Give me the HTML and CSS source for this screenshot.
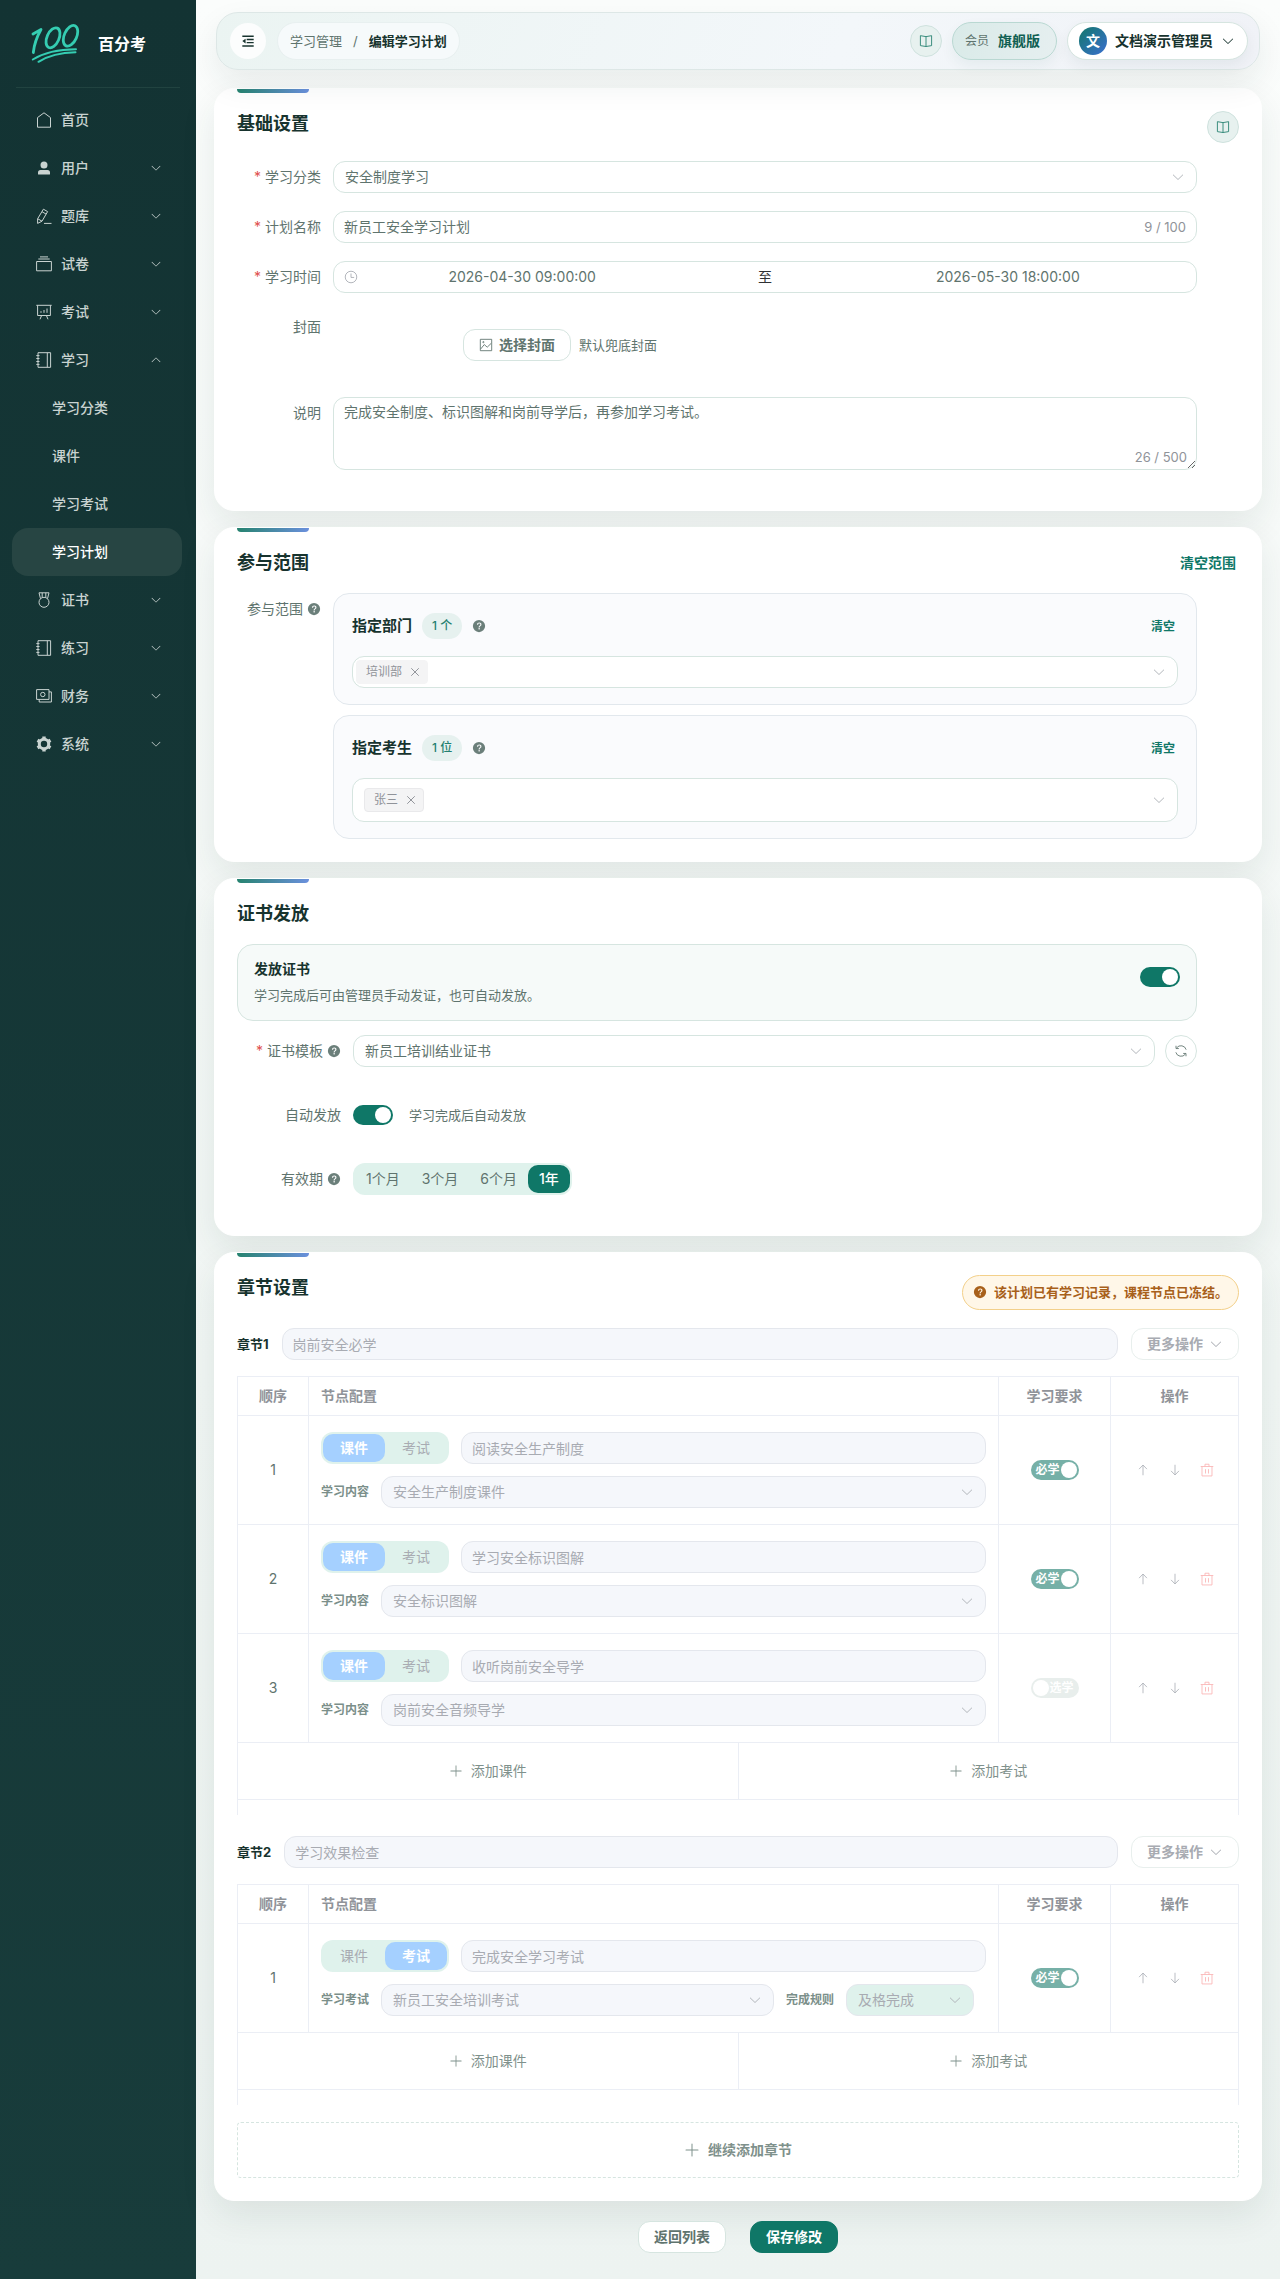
FILE: index.html
```html
<!DOCTYPE html>
<html lang="zh-CN">
<head>
	<meta charset="utf-8">
	<meta name="viewport" content="width=device-width, initial-scale=1">
	<title>编辑学习计划</title>
	<link rel="stylesheet" href="styles.css">
</head>
<body>
	<!-- icon sprite -->
	<svg class="sprite" aria-hidden="true">
		<symbol id="i-home" viewBox="0 0 16 16"><path d="M1.5 5.6 8 .8l6.500 4.800v9.600h-13z"/></symbol>
		<symbol id="i-user" viewBox="0 0 1024 1024"><path class="fill" d="M288 320a224 224 0 1 0 448 0 224 224 0 1 0-448 0zm544 608H160a32 32 0 0 1-32-32v-96a160 160 0 0 1 160-160h448a160 160 0 0 1 160 160v96a32 32 0 0 1-32 32z"/></symbol>
		<symbol id="i-edit" viewBox="0 0 16 16"><path d="M7.400 1.200 11.600 3.600 6 13.200l-4.400 2.200V10.800zM6 3.700l4.100 2.400M1.800 10.800 6 13.200M8 15.400h7.500"/></symbol>
		<symbol id="i-files" viewBox="0 0 16 16"><path d="M.6 5.500h14.800v9.300H.6zM2.300 3h11.400M4 .9h8"/></symbol>
		<symbol id="i-board" viewBox="0 0 16 16"><path d="M.3 1.300h15.400M1.600 1.300v10.200h12.800V1.300M5.600 11.500 4 15.300M10.400 11.500l1.600 3.800M5 7.200v1.600M8 6v2.800M11 4.500v4.300"/></symbol>
		<symbol id="i-notebook" viewBox="0 0 16 16"><path d="M2 .7h12.600v14.600H2zM11.300.7v14.600M.3 3.600h3.200M.3 6.500h3.200M.3 9.500h3.200M.3 12.400h3.200"/></symbol>
		<symbol id="i-medal" viewBox="0 0 16 16"><circle cx="8" cy="10.300" r="5"/><path d="M4.500 6.700 3 .8h10l-1.500 5.900M6.200.8v4.600M9.800.8v4.600"/></symbol>
		<symbol id="i-money" viewBox="0 0 16 16"><path d="M.6 1.600h12.400v9.800H.6zM13 3.900h2.400v10.100H3.200v-2.600"/><circle cx="6.800" cy="6.500" r="2.200"/></symbol>
		<symbol id="i-gear" viewBox="0 0 16 16"><circle cx="8" cy="8" r="4.700" stroke-width="3"/><path stroke-width="3.400" d="M8 3.500v-3M8 12.500v3M4.100 5.750 1.500 4.250M11.900 5.750l2.600-1.500M4.100 10.250l-2.600 1.500M11.900 10.250l2.600 1.500"/></symbol>
		<symbol id="i-down" viewBox="0 0 1024 1024"><path class="fill" d="M831.872 340.864 512 652.672 192.128 340.864a30.592 30.592 0 0 0-42.752 0 29.12 29.12 0 0 0 0 41.600L489.664 714.240a32 32 0 0 0 44.672 0l340.288-331.712a29.12 29.12 0 0 0 0-41.728 30.592 30.592 0 0 0-42.752 0z"/></symbol>
		<symbol id="i-up" viewBox="0 0 1024 1024"><path class="fill" transform="rotate(180 512 512)" d="M831.872 340.864 512 652.672 192.128 340.864a30.592 30.592 0 0 0-42.752 0 29.12 29.12 0 0 0 0 41.600L489.664 714.240a32 32 0 0 0 44.672 0l340.288-331.712a29.12 29.12 0 0 0 0-41.728 30.592 30.592 0 0 0-42.752 0z"/></symbol>
		<symbol id="i-plus" viewBox="0 0 1024 1024"><path class="fill" d="M480 480V128a32 32 0 0 1 64 0v352h352a32 32 0 1 1 0 64H544v352a32 32 0 1 1-64 0V544H128a32 32 0 0 1 0-64h352z"/></symbol>
		<symbol id="i-close" viewBox="0 0 16 16"><path stroke-width="1.300" d="m3 3 10 10M13 3 3 13"/></symbol>
		<symbol id="i-help" viewBox="0 0 1024 1024"><path class="fill" d="M512 64a448 448 0 1 1 0 896 448 448 0 0 1 0-896zm23.744 191.488c-52.096 0-92.928 14.784-123.200 44.352-30.976 29.568-45.760 70.400-45.760 122.496h80.256c0-29.568 5.632-52.800 17.600-68.992 13.376-19.712 35.200-28.864 66.176-28.864 23.936 0 42.944 6.336 56.320 19.712 12.672 13.376 19.712 31.680 19.712 54.912 0 17.600-6.336 34.496-19.008 49.984l-8.448 9.856c-45.760 40.832-73.216 70.400-82.368 89.408-9.856 19.008-14.080 42.240-14.080 68.992v9.856h80.960v-9.856c0-16.896 3.520-31.680 10.560-45.760 6.336-12.672 15.488-24.640 28.160-35.200 33.792-29.568 54.208-48.576 60.544-55.616 16.896-22.528 26.048-51.392 26.048-86.592 0-42.944-14.080-76.736-42.240-101.376-28.160-25.344-65.472-37.312-111.232-37.312zm-12.672 406.208a54.272 54.272 0 0 0-38.720 14.784 49.408 49.408 0 0 0-15.488 38.016c0 15.488 4.928 28.160 15.488 38.016A54.848 54.848 0 0 0 523.072 768c15.488 0 28.160-4.928 38.720-14.784a51.520 51.520 0 0 0 16.192-38.720 51.968 51.968 0 0 0-15.488-38.016 55.936 55.936 0 0 0-39.424-14.784z"/></symbol>
		<symbol id="i-fold" viewBox="0 0 16 16"><path stroke-width="1.600" d="M1.500 2.500h13M6.500 6.300h8M6.500 9.900h8M1.500 13.700h13"/><path class="fill" d="M5.200 5.300v5.500L1.500 8z"/></symbol>
		<symbol id="i-book" viewBox="0 0 16 16"><path d="M8 3 1.600 1.900v11.400L8 14.300l6.400-1V1.900zM8 3v11.300"/></symbol>
		<symbol id="i-clock" viewBox="0 0 16 16"><circle cx="8" cy="8" r="6.600"/><path d="M8 4v4.500h3.600"/></symbol>
		<symbol id="i-picture" viewBox="0 0 16 16"><path d="M1.500 1.500h13v13h-13zM2 12.500l4-5 3.400 3 4.600-4.500"/><circle cx="5" cy="4.700" r=".7"/></symbol>
		<symbol id="i-refresh" viewBox="0 0 16 16"><path d="M13.900 6.500A6.200 6.200 0 0 0 3 4.400M2.100 9.500A6.200 6.200 0 0 0 13 11.600M2.300 2v3.200h3.200M13.700 14v-3.200h-3.200"/></symbol>
		<symbol id="i-top" viewBox="0 0 16 16"><path d="M8 14V2.300M3.500 7 8 2.300 12.500 7"/></symbol>
		<symbol id="i-bottom" viewBox="0 0 16 16"><path d="M8 2v11.700M3.500 9 8 13.700 12.500 9"/></symbol>
		<symbol id="i-delete" viewBox="0 0 16 16"><path d="M.8 4h14.400M5.700 4V1.400h4.600V4M2.300 4v10.800h11.400V4M6.300 7v5M9.700 7v5"/></symbol>
	</svg>

	<div class="layout">
		<aside class="sidebar">
			<div class="brand">
				<svg class="brand-logo" viewBox="0 0 50 40" aria-hidden="true">
					<g fill="none" stroke="#35cdb2" stroke-width="2.800" stroke-linecap="round" stroke-linejoin="round">
						<path d="M2 10 10 5.500Q3.500 17 2.300 28.500"/>
						<ellipse cx="22" cy="13.800" rx="6" ry="10.600" transform="rotate(24 22 13.800)"/>
						<ellipse cx="39.500" cy="11.800" rx="6.200" ry="11" transform="rotate(24 39.500 11.800)"/>
						<path d="M1.800 35.500Q18 25.500 45 25.300" stroke-width="2"/>
						<path d="M7.500 37.800Q22 28.800 44.500 28.300" stroke-width="2"/>
					</g>
				</svg>
				<span class="brand-name">百分考</span>
			</div>
			<nav class="menu">
				<a class="menu-item" href="#"><svg class="icon"><use href="#i-home"/></svg>首页</a>
				<a class="menu-item" href="#"><svg class="icon"><use href="#i-user"/></svg>用户<svg class="arrow"><use href="#i-down"/></svg></a>
				<a class="menu-item" href="#"><svg class="icon"><use href="#i-edit"/></svg>题库<svg class="arrow"><use href="#i-down"/></svg></a>
				<a class="menu-item" href="#"><svg class="icon"><use href="#i-files"/></svg>试卷<svg class="arrow"><use href="#i-down"/></svg></a>
				<a class="menu-item" href="#"><svg class="icon"><use href="#i-board"/></svg>考试<svg class="arrow"><use href="#i-down"/></svg></a>
				<a class="menu-item" href="#"><svg class="icon"><use href="#i-notebook"/></svg>学习<svg class="arrow"><use href="#i-up"/></svg></a>
				<a class="menu-item sub" href="#">学习分类</a>
				<a class="menu-item sub" href="#">课件</a>
				<a class="menu-item sub" href="#">学习考试</a>
				<a class="menu-item sub active" href="#">学习计划</a>
				<a class="menu-item" href="#"><svg class="icon"><use href="#i-medal"/></svg>证书<svg class="arrow"><use href="#i-down"/></svg></a>
				<a class="menu-item" href="#"><svg class="icon"><use href="#i-notebook"/></svg>练习<svg class="arrow"><use href="#i-down"/></svg></a>
				<a class="menu-item" href="#"><svg class="icon"><use href="#i-money"/></svg>财务<svg class="arrow"><use href="#i-down"/></svg></a>
				<a class="menu-item" href="#"><svg class="icon"><use href="#i-gear"/></svg>系统<svg class="arrow"><use href="#i-down"/></svg></a>
			</nav>
		</aside>

		<div class="main">
			<header class="topbar">
				<button class="fold" type="button" aria-label="折叠菜单"><svg class="icon"><use href="#i-fold"/></svg></button>
				<nav class="crumbs">
					<a href="#">学习管理</a>
					<span class="slash">/</span>
					<strong>编辑学习计划</strong>
				</nav>
				<div class="topbar-right">
					<button class="round help-doc" type="button" aria-label="帮助文档"><svg class="icon"><use href="#i-book"/></svg></button>
					<a class="member" href="#"><span>会员</span><strong>旗舰版</strong></a>
					<button class="account" type="button">
						<span class="avatar">文</span>
						文档演示管理员
						<svg class="icon"><use href="#i-down"/></svg>
					</button>
				</div>
			</header>

			<section class="card">
				<div class="card-head">
					<h2>基础设置</h2>
					<button class="round help-doc" type="button" aria-label="帮助文档"><svg class="icon"><use href="#i-book"/></svg></button>
				</div>
				<div class="form">
					<div class="form-item">
						<label class="label required" for="category">学习分类</label>
						<select class="field" id="category"><option>安全制度学习</option></select>
					</div>
					<div class="form-item">
						<label class="label required" for="plan-name">计划名称</label>
						<div class="field count-field">
							<input id="plan-name" type="text" value="新员工安全学习计划">
							<span class="count">9 / 100</span>
						</div>
					</div>
					<div class="form-item">
						<label class="label required" for="start">学习时间</label>
						<div class="field range">
							<svg class="icon"><use href="#i-clock"/></svg>
							<input id="start" type="text" value="2026-04-30 09:00:00">
							<span class="to">至</span>
							<input type="text" aria-label="结束时间" value="2026-05-30 18:00:00">
						</div>
					</div>
					<div class="form-item">
						<span class="label">封面</span>
						<div class="cover">
							<button class="btn" type="button"><svg class="icon"><use href="#i-picture"/></svg>选择封面</button>
							<span class="hint">默认兜底封面</span>
						</div>
					</div>
					<div class="form-item">
						<label class="label" for="remark">说明</label>
						<div class="area">
							<textarea class="field" id="remark">完成安全制度、标识图解和岗前导学后，再参加学习考试。</textarea>
							<span class="count">26 / 500</span>
						</div>
					</div>
				</div>
			</section>

			<section class="card">
				<div class="card-head">
					<h2>参与范围</h2>
					<button class="link" type="button">清空范围</button>
				</div>
				<div class="form">
					<div class="form-item">
						<span class="label">参与范围<svg class="help"><use href="#i-help"/></svg></span>
						<div class="scopes">
							<div class="scope">
								<div class="scope-head">
									<strong>指定部门</strong>
									<span class="badge">1 个</span>
									<svg class="help"><use href="#i-help"/></svg>
									<button class="link small" type="button">清空</button>
								</div>
								<div class="field multi">
									<span class="tag plain">培训部<button type="button" aria-label="移除培训部"><svg><use href="#i-close"/></svg></button></span>
									<select aria-label="指定部门"><option></option></select>
								</div>
							</div>
							<div class="scope">
								<div class="scope-head">
									<strong>指定考生</strong>
									<span class="badge">1 位</span>
									<svg class="help"><use href="#i-help"/></svg>
									<button class="link small" type="button">清空</button>
								</div>
								<div class="field multi tall">
									<span class="tag">张三<button type="button" aria-label="移除张三"><svg><use href="#i-close"/></svg></button></span>
									<select aria-label="指定考生"><option></option></select>
								</div>
							</div>
						</div>
					</div>
				</div>
			</section>

			<section class="card">
				<div class="card-head">
					<h2>证书发放</h2>
				</div>
				<div class="form wide">
					<div class="cert-box">
						<div>
							<label class="cert-title" for="issue">发放证书</label>
							<p class="cert-desc">学习完成后可由管理员手动发证，也可自动发放。</p>
						</div>
						<input class="switch" id="issue" type="checkbox" checked>
					</div>
					<div class="form-item">
						<label class="label required" for="template">证书模板<svg class="help"><use href="#i-help"/></svg></label>
						<select class="field" id="template"><option>新员工培训结业证书</option></select>
						<button class="round refresh" type="button" aria-label="刷新"><svg class="icon"><use href="#i-refresh"/></svg></button>
					</div>
					<div class="form-item">
						<label class="label" for="auto">自动发放</label>
						<div class="inline">
							<input class="switch" id="auto" type="checkbox" checked>
							<span class="hint">学习完成后自动发放</span>
						</div>
					</div>
					<div class="form-item">
						<span class="label">有效期<svg class="help"><use href="#i-help"/></svg></span>
						<div class="segment">
							<label><input type="radio" name="valid"><span>1个月</span></label>
							<label><input type="radio" name="valid"><span>3个月</span></label>
							<label><input type="radio" name="valid"><span>6个月</span></label>
							<label><input type="radio" name="valid" checked><span>1年</span></label>
						</div>
					</div>
				</div>
			</section>

			<section class="card">
				<div class="card-head">
					<h2>章节设置</h2>
					<div class="notice"><svg class="help"><use href="#i-help"/></svg>该计划已有学习记录，课程节点已冻结。</div>
				</div>

				<div class="chapter">
					<div class="chapter-head">
						<label for="chapter1">章节1</label>
						<input class="field" id="chapter1" type="text" value="岗前安全必学" disabled>
						<button class="btn more" type="button" disabled>更多操作<svg class="icon"><use href="#i-down"/></svg></button>
					</div>
					<div class="nodes">
						<table>
							<thead>
								<tr><th class="col-no">顺序</th><th class="col-cfg">节点配置</th><th class="col-req">学习要求</th><th class="col-op">操作</th></tr>
							</thead>
							<tbody>
								<tr>
									<td class="col-no">1</td>
									<td class="col-cfg">
										<div class="line">
											<div class="segment type">
												<label><input type="radio" name="t1" checked disabled><span>课件</span></label>
												<label><input type="radio" name="t1" disabled><span>考试</span></label>
											</div>
											<input class="field" type="text" aria-label="节点名称" value="阅读安全生产制度" disabled>
										</div>
										<div class="line">
											<label class="line-label" for="c1">学习内容</label>
											<select class="field" id="c1" disabled><option>安全生产制度课件</option></select>
										</div>
									</td>
									<td class="col-req"><label class="req"><input class="switch" type="checkbox" checked disabled><span>必学</span></label></td>
									<td class="col-op">
										<div class="ops">
											<button type="button" aria-label="上移" disabled><svg><use href="#i-top"/></svg></button>
											<button type="button" aria-label="下移" disabled><svg><use href="#i-bottom"/></svg></button>
											<button class="danger" type="button" aria-label="删除" disabled><svg><use href="#i-delete"/></svg></button>
										</div>
									</td>
								</tr>
								<tr>
									<td class="col-no">2</td>
									<td class="col-cfg">
										<div class="line">
											<div class="segment type">
												<label><input type="radio" name="t2" checked disabled><span>课件</span></label>
												<label><input type="radio" name="t2" disabled><span>考试</span></label>
											</div>
											<input class="field" type="text" aria-label="节点名称" value="学习安全标识图解" disabled>
										</div>
										<div class="line">
											<label class="line-label" for="c2">学习内容</label>
											<select class="field" id="c2" disabled><option>安全标识图解</option></select>
										</div>
									</td>
									<td class="col-req"><label class="req"><input class="switch" type="checkbox" checked disabled><span>必学</span></label></td>
									<td class="col-op">
										<div class="ops">
											<button type="button" aria-label="上移" disabled><svg><use href="#i-top"/></svg></button>
											<button type="button" aria-label="下移" disabled><svg><use href="#i-bottom"/></svg></button>
											<button class="danger" type="button" aria-label="删除" disabled><svg><use href="#i-delete"/></svg></button>
										</div>
									</td>
								</tr>
								<tr>
									<td class="col-no">3</td>
									<td class="col-cfg">
										<div class="line">
											<div class="segment type">
												<label><input type="radio" name="t3" checked disabled><span>课件</span></label>
												<label><input type="radio" name="t3" disabled><span>考试</span></label>
											</div>
											<input class="field" type="text" aria-label="节点名称" value="收听岗前安全导学" disabled>
										</div>
										<div class="line">
											<label class="line-label" for="c3">学习内容</label>
											<select class="field" id="c3" disabled><option>岗前安全音频导学</option></select>
										</div>
									</td>
									<td class="col-req"><label class="req"><input class="switch" type="checkbox" disabled><span>选学</span></label></td>
									<td class="col-op">
										<div class="ops">
											<button type="button" aria-label="上移" disabled><svg><use href="#i-top"/></svg></button>
											<button type="button" aria-label="下移" disabled><svg><use href="#i-bottom"/></svg></button>
											<button class="danger" type="button" aria-label="删除" disabled><svg><use href="#i-delete"/></svg></button>
										</div>
									</td>
								</tr>
							</tbody>
						</table>
						<div class="add-row">
							<button type="button" disabled><svg class="icon"><use href="#i-plus"/></svg>添加课件</button>
							<button type="button" disabled><svg class="icon"><use href="#i-plus"/></svg>添加考试</button>
						</div>
					</div>
				</div>

				<div class="chapter">
					<div class="chapter-head">
						<label for="chapter2">章节2</label>
						<input class="field" id="chapter2" type="text" value="学习效果检查" disabled>
						<button class="btn more" type="button" disabled>更多操作<svg class="icon"><use href="#i-down"/></svg></button>
					</div>
					<div class="nodes">
						<table>
							<thead>
								<tr><th class="col-no">顺序</th><th class="col-cfg">节点配置</th><th class="col-req">学习要求</th><th class="col-op">操作</th></tr>
							</thead>
							<tbody>
								<tr>
									<td class="col-no">1</td>
									<td class="col-cfg">
										<div class="line">
											<div class="segment type">
												<label><input type="radio" name="t4" disabled><span>课件</span></label>
												<label><input type="radio" name="t4" checked disabled><span>考试</span></label>
											</div>
											<input class="field" type="text" aria-label="节点名称" value="完成安全学习考试" disabled>
										</div>
										<div class="line exam">
											<label class="line-label" for="c4">学习考试</label>
											<select class="field" id="c4" disabled><option>新员工安全培训考试</option></select>
											<label class="line-label" for="rule">完成规则</label>
											<select class="field rule" id="rule" disabled><option>及格完成</option></select>
										</div>
									</td>
									<td class="col-req"><label class="req"><input class="switch" type="checkbox" checked disabled><span>必学</span></label></td>
									<td class="col-op">
										<div class="ops">
											<button type="button" aria-label="上移" disabled><svg><use href="#i-top"/></svg></button>
											<button type="button" aria-label="下移" disabled><svg><use href="#i-bottom"/></svg></button>
											<button class="danger" type="button" aria-label="删除" disabled><svg><use href="#i-delete"/></svg></button>
										</div>
									</td>
								</tr>
							</tbody>
						</table>
						<div class="add-row">
							<button type="button" disabled><svg class="icon"><use href="#i-plus"/></svg>添加课件</button>
							<button type="button" disabled><svg class="icon"><use href="#i-plus"/></svg>添加考试</button>
						</div>
					</div>
				</div>

				<button class="add-chapter" type="button" disabled><svg class="icon"><use href="#i-plus"/></svg>继续添加章节</button>
			</section>

			<footer class="actions">
				<button class="btn" type="button">返回列表</button>
				<button class="btn primary" type="submit">保存修改</button>
			</footer>
		</div>
	</div>
</body>
</html>
```
FILE: styles.css
```css
:root {
	--primary: #0f7767;
	--title: #17332e;
	--text: #5f746e;
	--border: #d6e5e0;
	--muted: #a8abb2;
	--line: #ebeef5;
}
* {
	box-sizing: border-box;
}
body {
	margin: 0;
	font-family: Inter, "Noto Sans CJK SC", sans-serif;
	font-size: 14px;
	line-height: 20px;
	color: var(--text);
}
button, input, select, textarea {
	margin: 0;
	font: inherit;
	color: inherit;
}
button {
	padding: 0;
	border: 0;
	background: none;
}
a {
	color: inherit;
	text-decoration: none;
}
svg {
	flex: none;
	fill: none;
	stroke: currentColor;
	stroke-width: 1;
}
svg .fill, .fill {
	fill: currentColor;
	stroke: none;
}
.sprite {
	display: none;
}
.icon {
	width: 14px;
	height: 14px;
}
.help {
	width: 14px;
	height: 14px;
	color: #6b7f7a;
}

.layout {
	display: flex;
	min-height: 100vh;
}

/* sidebar */
.sidebar {
	flex: none;
	width: 196px;
	background: linear-gradient(180deg, #133333, #183c3b);
	color: #c9d3d1;
}
.brand {
	display: flex;
	align-items: center;
	gap: 17px;
	height: 88px;
	margin: 0 16px;
	padding-left: 15px;
	border-bottom: 1px solid #214340;
}
.brand-logo {
	width: 50px;
	height: 40px;
}
.brand-name {
	font-size: 16px;
	font-weight: 700;
	color: #fff;
}
.menu {
	padding: 8px 14px 0 12px;
}
.menu-item {
	display: flex;
	align-items: center;
	gap: 9px;
	height: 48px;
	padding: 0 20px 0 24px;
	border-radius: 16px;
	font-weight: 500;
}
.menu-item .icon {
	width: 16px;
	height: 16px;
}
.menu-item .arrow {
	width: 12px;
	height: 12px;
	margin-left: auto;
}
.menu-item.sub {
	padding-left: 40px;
}
.menu-item.active {
	background: #274543;
	color: #fff;
}

/* main column */
.main {
	flex: 1;
	min-width: 0;
	padding: 12px 18px 26px;
	background: linear-gradient(180deg, #fbfdfc, #f1f6f4 60%, #edf3f1);
}
.topbar {
	position: relative;
	z-index: 1;
	display: flex;
	align-items: center;
	gap: 11px;
	height: 58px;
	margin: 0 2px 18px;
	padding: 0 11px 0 13px;
	border: 1px solid #dde7e6;
	border-radius: 22px;
	background: linear-gradient(110deg, #ebf4f2, #f3f7fa 60%, #f0f2f7);
	box-shadow: 0 14px 32px rgba(20, 50, 45, .08);
}
.fold {
	display: flex;
	align-items: center;
	justify-content: center;
	width: 36px;
	height: 36px;
	border-radius: 50%;
	background: #fcfdfd;
	color: var(--title);
}
.crumbs {
	display: flex;
	align-items: center;
	gap: 11px;
	height: 38px;
	padding: 0 12px;
	border: 1px solid #e8f0f0;
	border-radius: 19px;
	background: #f6fafb;
	font-size: 13px;
}
.crumbs strong {
	color: var(--title);
}
.topbar-right {
	display: flex;
	align-items: center;
	gap: 10px;
	margin-left: auto;
}
.round {
	display: flex;
	flex: none;
	align-items: center;
	justify-content: center;
	width: 32px;
	height: 32px;
	border: 1px solid var(--border);
	border-radius: 50%;
}
.help-doc {
	border-color: #cfe2de;
	background: #e7f1ef;
	color: #23806f;
}
.member {
	display: flex;
	align-items: center;
	gap: 9px;
	height: 38px;
	padding: 0 16px 0 12px;
	border: 1px solid #b9d8d2;
	border-radius: 19px;
	background: linear-gradient(110deg, #d9eae8, #e6eff0);
	box-shadow: 0 6px 14px rgba(20, 80, 70, .06);
}
.member span {
	font-size: 12px;
}
.member strong {
	color: #0f5f52;
}
.account {
	display: flex;
	align-items: center;
	gap: 8px;
	height: 38px;
	padding: 0 12px 0 11px;
	border: 1px solid var(--border);
	border-radius: 19px;
	background: #fff;
	box-shadow: 0 6px 14px rgba(20, 50, 45, .06);
	color: var(--title);
	font-weight: 600;
}
.avatar {
	width: 28px;
	height: 28px;
	border-radius: 50%;
	background: linear-gradient(135deg, #12776a, #3a6fd0);
	color: #fff;
	font-weight: 700;
	line-height: 28px;
	text-align: center;
}

/* cards */
.card {
	margin-bottom: 16px;
	padding: 22px;
	border: 1px solid #fff;
	border-radius: 20px;
	background: #fff;
	box-shadow: 0 14px 36px rgba(20, 50, 45, .09);
}
.card::before {
	content: "";
	display: block;
	width: 72px;
	height: 4px;
	margin: -22px 0 18px;
	border-radius: 0 0 4px 4px;
	background: linear-gradient(90deg, #26836f, #6b90dd);
}
.card-head {
	display: flex;
	align-items: flex-start;
	justify-content: space-between;
	margin-bottom: 18px;
}
.card-head h2 {
	margin: 0;
	font-size: 18px;
	font-weight: 700;
	line-height: 25px;
	color: var(--title);
}
.link {
	padding: 0 3px;
	line-height: 25px;
	font-weight: 700;
	color: var(--primary);
}
.link.small {
	margin-left: auto;
	font-size: 12px;
}

/* form */
.form {
	max-width: 960px;
}
.form-item {
	display: flex;
	margin-bottom: 18px;
}
.label {
	display: flex;
	flex: none;
	align-items: center;
	justify-content: flex-end;
	width: 96px;
	height: 32px;
	padding-right: 12px;
}
.label .help {
	margin-left: 4px;
}
.label.required::before {
	content: "*";
	margin-right: 4px;
	color: #e0504e;
}
.form.wide .label {
	width: 116px;
}
.form.wide .form-item {
	margin-bottom: 32px;
}
.form.wide .form-item:last-child {
	margin-bottom: 18px;
}
.field {
	flex: 1;
	min-width: 0;
	height: 32px;
	padding: 0 10px;
	border: 1px solid var(--border);
	border-radius: 12px;
	background-color: #fff;
}
select {
	appearance: none;
	padding: 0 32px 0 11px;
	background: url("data:image/svg+xml,%3Csvg xmlns='http://www.w3.org/2000/svg' viewBox='0 0 14 14'%3E%3Cpath d='m2.300 5 4.700 4.500L11.700 5' fill='none' stroke='%23b3b7bc' stroke-linecap='round'/%3E%3C/svg%3E") no-repeat right 11px center / 14px 14px;
}
select.field {
	padding: 0 32px 0 11px;
}
.field:disabled {
	border-color: #e4e7ed;
	background-color: #f5f7fb;
	color: var(--muted);
	opacity: 1;
}
.count-field, .range, .multi {
	display: flex;
	align-items: center;
}
.count-field input, .range input, .multi select {
	min-width: 0;
	padding: 0;
	border: 0;
	background-color: transparent;
}
.count-field input {
	flex: 1;
}
.count {
	font-size: 13px;
	color: #909399;
}
.range .icon {
	color: #a8abb2;
}
.range input {
	width: 39%;
	text-align: center;
}
.range .to {
	flex: 1;
	color: #303133;
	text-align: center;
}
.range::after {
	content: "";
	width: 14px;
}
.cover {
	display: flex;
	flex: 1;
	align-items: center;
	gap: 8px;
	height: 68px;
	padding-left: 130px;
}
.hint {
	font-size: 13px;
}
.btn {
	display: flex;
	align-items: center;
	justify-content: center;
	gap: 6px;
	height: 32px;
	padding: 0 15px;
	border: 1px solid var(--border);
	border-radius: 12px;
	background: #fff;
	font-weight: 600;
}
.btn.primary {
	border-color: var(--primary);
	background: var(--primary);
	color: #fff;
}
.area {
	position: relative;
	flex: 1;
}
.area textarea {
	display: block;
	width: 100%;
	height: 73px;
	padding: 4px 10px;
	resize: vertical;
}
.area .count {
	position: absolute;
	right: 10px;
	bottom: 3px;
}

/* scope boxes */
.scopes {
	display: flex;
	flex: 1;
	flex-direction: column;
	gap: 10px;
	min-width: 0;
}
.card .form-item:has(.scopes) {
	margin-bottom: 0;
}
.scope {
	padding: 16px 18px;
	border: 1px solid #e2e8ed;
	border-radius: 16px;
	background: #fafbfd;
}
.scope-head {
	display: flex;
	align-items: center;
	gap: 10px;
	height: 32px;
	margin-bottom: 14px;
}
.scope-head strong {
	font-size: 15px;
	color: var(--title);
}
.badge {
	padding: 0 10px;
	border-radius: 13px;
	background: #e6f1ef;
	color: #23806f;
	font-size: 12px;
	font-weight: 500;
	line-height: 26px;
}
.multi {
	padding: 0 0 0 3px;
	border-color: var(--border);
}
.multi.tall {
	height: 44px;
	padding-left: 11px;
}
.multi select {
	flex: 1;
	height: 100%;
}
.tag {
	display: flex;
	align-items: center;
	gap: 7px;
	height: 24px;
	padding: 0 6px 0 9px;
	border: 1px solid #e9e9eb;
	border-radius: 4px;
	background: #f4f4f5;
	color: #909399;
	font-size: 12px;
}
.tag.plain {
	border-color: #f4f4f5;
}
.tag button {
	display: flex;
}
.tag svg {
	width: 12px;
	height: 12px;
}

/* certificate */
.cert-box {
	display: flex;
	justify-content: space-between;
	margin-bottom: 14px;
	padding: 14px 16px;
	border: 1px solid var(--border);
	border-radius: 16px;
	background: #f6faf9;
}
.cert-title {
	display: block;
	font-weight: 700;
	color: var(--title);
}
.cert-desc {
	margin: 6px 0 0;
	font-size: 13px;
	line-height: 21px;
}
.cert-box .switch {
	margin-top: 8px;
}
.switch {
	display: block;
	flex: none;
	appearance: none;
	width: 40px;
	height: 20px;
	padding: 2px;
	border-radius: 10px;
	background: #dce5e2;
}
.switch::before {
	content: "";
	display: block;
	width: 16px;
	height: 16px;
	border-radius: 50%;
	background: #fff;
}
.switch:checked {
	background: var(--primary);
}
.switch:checked::before {
	margin-left: auto;
}
.refresh {
	margin-left: 10px;
}
.inline {
	display: flex;
	align-items: center;
	gap: 16px;
}
.segment {
	display: flex;
	height: 32px;
	padding: 2px;
	border-radius: 12px;
	background: #dff2ec;
}
.segment input {
	position: absolute;
	opacity: 0;
}
.segment span {
	display: block;
	padding: 0 11px;
	border-radius: 10px;
	line-height: 28px;
}
.segment input:checked + span {
	background: var(--primary);
	color: #fff;
	font-weight: 500;
}

/* chapters */
.notice {
	display: flex;
	align-items: center;
	gap: 7px;
	padding: 7px 10px 8px;
	border: 1px solid #f3d08a;
	border-radius: 18px;
	background: #fff7e8;
	color: #a8601a;
	font-size: 13px;
	line-height: 18px;
	font-weight: 600;
}
.notice .help {
	color: inherit;
}
.chapter {
	margin-bottom: 17px;
}
.chapter + .chapter {
	margin-top: 21px;
}
.chapter-head {
	display: flex;
	align-items: center;
	gap: 13px;
	margin-bottom: 16px;
}
.chapter-head label {
	font-size: 13px;
	font-weight: 700;
	color: var(--title);
}
.more {
	border-color: #e8efed;
	color: var(--muted);
}
.nodes {
	padding-bottom: 15px;
	border: solid var(--line);
	border-width: 1px 1px 0;
}
table {
	width: 100%;
	table-layout: fixed;
	border-collapse: separate;
	border-spacing: 0;
}
th, td {
	padding: 0 12px;
	border-right: 1px solid var(--line);
	border-bottom: 1px solid var(--line);
	text-align: center;
}
th {
	height: 39px;
	color: #909399;
	font-weight: 700;
}
td {
	height: 109px;
}
.col-no {
	width: 71px;
}
.col-cfg {
	text-align: left;
}
.col-req {
	width: 112px;
}
.col-op {
	width: 127px;
	border-right: 0;
}
.line {
	display: flex;
	align-items: center;
	gap: 12px;
}
.line + .line {
	margin-top: 12px;
}
.line.exam {
	padding-right: 12px;
}
.line-label {
	font-size: 12px;
	font-weight: 700;
	color: #7b8f8a;
}
.segment.type span {
	padding: 0 17px;
	color: var(--muted);
}
.segment.type input:checked + span {
	background: #a5d0ff;
	color: #fff;
	font-weight: 700;
}
.field.rule {
	flex: none;
	width: 128px;
	background-color: #dff2ec;
}
.req {
	position: relative;
	display: block;
	width: 48px;
	margin: 0 auto;
}
.req .switch {
	width: 48px;
	background: #e8eeec;
}
.req .switch:checked {
	background: #76b0a7;
}
.req span {
	position: absolute;
	top: 0;
	right: 5px;
	font-size: 12px;
	font-weight: 600;
	color: #fff;
}
.req :checked + span {
	right: auto;
	left: 5px;
}
.ops {
	display: flex;
	justify-content: center;
	gap: 18px;
	color: #b0b4ba;
}
.ops button {
	display: flex;
}
.ops svg {
	width: 14px;
	height: 14px;
}
.ops .danger {
	color: #fab6b6;
}
.add-row {
	display: flex;
	border-bottom: 1px solid var(--line);
}
.add-row button {
	display: flex;
	flex: 1;
	align-items: center;
	justify-content: center;
	gap: 8px;
	height: 56px;
	color: #7f918c;
}
.add-row button + button {
	border-left: 1px solid var(--line);
}
.add-chapter {
	display: flex;
	align-items: center;
	justify-content: center;
	gap: 8px;
	width: 100%;
	height: 56px;
	border: 1px dashed var(--border);
	border-radius: 4px;
	color: #7f918c;
	font-weight: 600;
}
.add-chapter .icon {
	width: 16px;
	height: 16px;
}
.actions {
	display: flex;
	justify-content: center;
	gap: 24px;
	padding-top: 4px;
}
```
